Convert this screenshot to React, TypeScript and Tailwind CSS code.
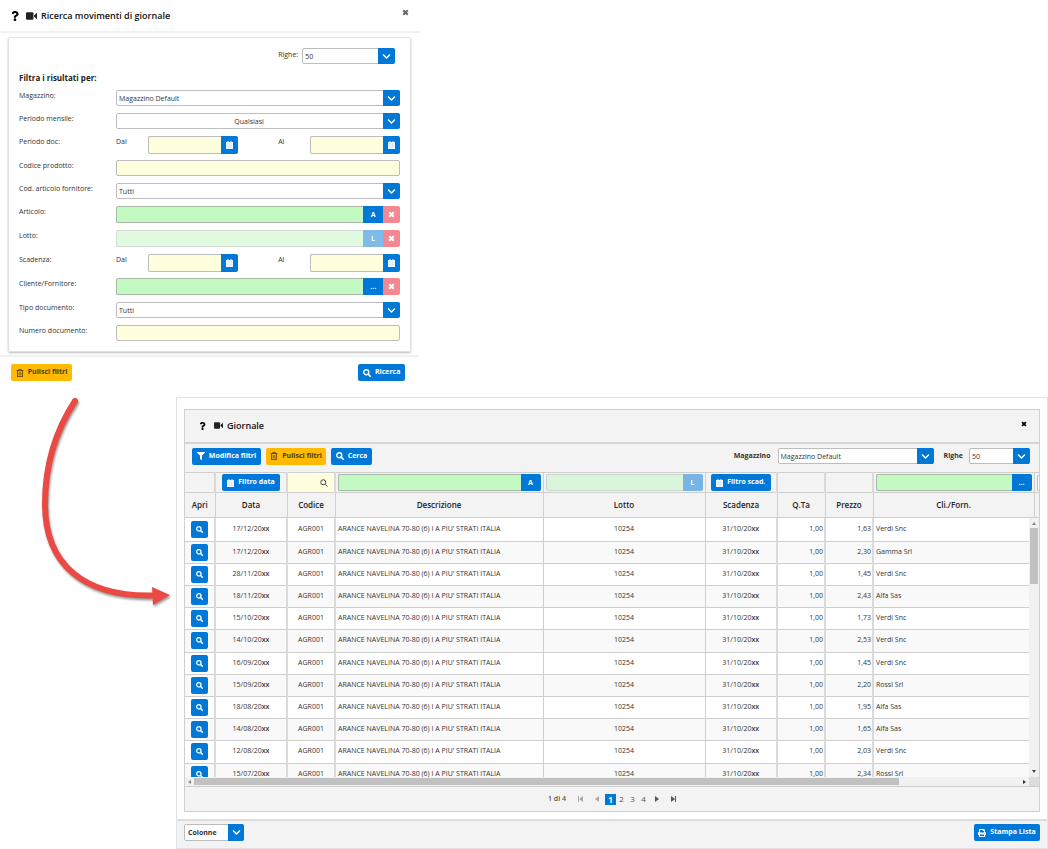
import React from 'react';
import { FaChevronDown, FaFilter, FaPrint, FaQuestion, FaRegTrashAlt } from 'react-icons/fa';

interface Movement {
    date: string;
    price: string;
    client: string;
}

const movements: Movement[] = [
    { date: '17/12/20', price: '1,63', client: 'Verdi Snc' },
    { date: '17/12/20', price: '2,30', client: 'Gamma Srl' },
    { date: '28/11/20', price: '1,45', client: 'Verdi Snc' },
    { date: '18/11/20', price: '2,43', client: 'Alfa Sas' },
    { date: '15/10/20', price: '1,73', client: 'Verdi Snc' },
    { date: '14/10/20', price: '2,53', client: 'Verdi Snc' },
    { date: '16/09/20', price: '1,45', client: 'Verdi Snc' },
    { date: '15/09/20', price: '2,20', client: 'Rossi Srl' },
    { date: '18/08/20', price: '1,95', client: 'Alfa Sas' },
    { date: '14/08/20', price: '1,65', client: 'Alfa Sas' },
    { date: '12/08/20', price: '2,03', client: 'Verdi Snc' },
    { date: '15/07/20', price: '2,34', client: 'Rossi Srl' },
];

type IconProps = { className?: string };

const CalendarIcon: React.FC<IconProps> = ({ className }) => (
    <svg viewBox="0 0 14 16" className={className} fill="currentColor">
        <path d="M3 0h2v2h4V0h2v2h3v14H0V2h3z" opacity=".95" />
        <path d="M1 6h12M5 6v9M9 6v9M1 10.500h12" stroke="#0078d7" strokeWidth=".6" opacity=".3" />
    </svg>
);

const SearchIcon: React.FC<IconProps> = ({ className }) => (
    <svg viewBox="0 0 16 16" className={className} fill="none" stroke="currentColor">
        <circle cx="6.500" cy="6.500" r="5" strokeWidth="2.800" />
        <path d="M10.500 10.500l4 4" strokeWidth="3.400" strokeLinecap="round" />
    </svg>
);

const CrossIcon: React.FC<IconProps> = ({ className }) => (
    <svg viewBox="0 0 14 14" className={className}>
        <path d="M2.500 2.500l9 9M11.500 2.500l-9 9" stroke="currentColor" strokeWidth="4" />
    </svg>
);

const VideoIcon: React.FC<IconProps> = ({ className }) => (
    <svg viewBox="0 0 20 14" className={className} fill="currentColor">
        <rect width="13.500" height="14" rx="2" />
        <path d="M14.500 6L20 1v12l-5.500-5z" />
    </svg>
);

const Select: React.FC<{ id: string; value: string; className?: string; align?: string }> = ({ id, value, className = '', align = 'pl-[2px]' }) => (
    <div className={`relative h-4 ${className}`}>
        <select id={id} className={`block w-full h-4 appearance-none rounded-[2px] border border-[#bdbdbd] bg-white pt-[2px] pr-[18px] text-[7px] leading-3 text-[#333] ${align}`}>
            <option>{value}</option>
        </select>
        <span className="pointer-events-none absolute right-0 top-0 flex h-4 w-[17px] items-center justify-center rounded-r-[2px] bg-[#0078d7] text-white">
            <FaChevronDown className="size-[9px]" />
        </span>
    </div>
);

const DateField: React.FC<{ id: string; label: string }> = ({ id, label }) => (
    <div className="flex">
        <label htmlFor={id} className="w-8 leading-3">{label}</label>
        <input id={id} className="h-[18px] w-[73px] rounded-l-[2px] border border-r-0 border-[#bdbdbd] bg-[#ffffdd]" />
        <button aria-label="Calendario" className="flex h-[18px] w-[17px] items-center justify-center rounded-r-[2px] bg-[#0078d7] text-white">
            <CalendarIcon className="h-2 w-[7px]" />
        </button>
    </div>
);

const DateRange: React.FC<{ id: string }> = ({ id }) => (
    <div className="flex justify-between">
        <DateField id={`${id}-dal`} label="Dal" />
        <DateField id={`${id}-al`} label="Al" />
    </div>
);

const Lookup: React.FC<{ id: string; letter: string; disabled?: boolean; clearable?: boolean; label?: string }> = ({ id, letter, disabled, clearable, label }) => (
    <div className="flex h-[17px]">
        <div className={`flex flex-1 ${disabled ? 'opacity-50' : ''}`}>
            <input id={id} aria-label={label} disabled={disabled} className="min-w-0 flex-1 rounded-l-[2px] border border-r-0 border-[#aab8aa] bg-[#c3f9c3]" />
            <button disabled={disabled} className={`w-5 bg-[#0078d7] pt-px text-[7px] font-bold text-white ${clearable ? '' : 'rounded-r-[2px]'}`}>{letter}</button>
        </div>
        {clearable && (
            <button aria-label="Rimuovi" className="flex w-[17px] items-center justify-center rounded-r-[2px] bg-[#f48890] text-white">
                <CrossIcon className="size-[7px]" />
            </button>
        )}
    </div>
);

const TextField: React.FC<{ id: string }> = ({ id }) => (
    <input id={id} className="block h-4 w-full rounded-[2px] border border-[#bdbdbd] bg-[#ffffdd]" />
);

const Field: React.FC<{ label: string; id: string; tall?: boolean; children: React.ReactNode }> = ({ label, id, tall, children }) => (
    <div className={`flex ${tall ? 'h-6' : 'h-[23px]'}`}>
        <label htmlFor={id} className="w-[97px] shrink-0 leading-3">{label}</label>
        <div className="flex-1">{children}</div>
    </div>
);

const ActionButton: React.FC<{ icon: React.ReactNode; color?: 'blue' | 'yellow'; className?: string; children: React.ReactNode }> = ({ icon, color = 'blue', className = '', children }) => (
    <button className={`flex h-[17px] items-center justify-center gap-1 whitespace-nowrap rounded-[2px] text-[7px] font-bold ${color === 'blue' ? 'bg-[#0078d7] text-white' : 'bg-[#ffba01] text-[#4a3a10]'} ${className}`}>
        {icon}
        {children}
    </button>
);

const SearchDialog: React.FC = () => (
    <section className="w-[40%] bg-white">
        <header className="flex h-[33px] items-center border-b-2 border-[#eff1f5] pl-[11px] pr-[10px] text-black">
            <FaQuestion className="mr-[7px] h-[10px] w-2" />
            <VideoIcon className="mr-1 h-2 w-[11px] text-[#222]" />
            <h1 className="flex-1 text-[9px] font-semibold text-[#111]">Ricerca movimenti di giornale</h1>
            <button aria-label="Chiudi" className="mb-[6px] text-[#666]"><CrossIcon className="size-[7px]" /></button>
        </header>
        <div className="mx-2 mt-1 mb-[3px] rounded-[2px] border border-[#dfe3e8] px-[10px] pb-[3px] pt-[10px] shadow-[0_1px_2px_#bbb]">
            <div className="mb-[7px] flex justify-end gap-1 pr-[5px]">
                <label htmlFor="righe" className="leading-[14px]">Righe:</label>
                <Select id="righe" value="50" className="w-[93px]" />
            </div>
            <h2 className="mb-[5px] text-[8px] font-bold leading-[14px] text-[#222]">Filtra i risultati per:</h2>
            <Field label="Magazzino:" id="mag"><Select id="mag" value="Magazzino Default" /></Field>
            <Field label="Periodo mensile:" id="mese"><Select id="mese" value="Qualsiasi" align="text-center" /></Field>
            <Field label="Periodo doc:" id="doc-dal" tall><DateRange id="doc" /></Field>
            <Field label="Codice prodotto:" id="codice"><TextField id="codice" /></Field>
            <Field label="Cod. articolo fornitore:" id="forn"><Select id="forn" value="Tutti" /></Field>
            <Field label="Articolo:" id="articolo" tall><Lookup id="articolo" letter="A" clearable /></Field>
            <Field label="Lotto:" id="lotto" tall><Lookup id="lotto" letter="L" disabled clearable /></Field>
            <Field label="Scadenza:" id="scad-dal" tall><DateRange id="scad" /></Field>
            <Field label="Cliente/Fornitore:" id="cliente" tall><Lookup id="cliente" letter="..." clearable /></Field>
            <Field label="Tipo documento:" id="tipo"><Select id="tipo" value="Tutti" /></Field>
            <Field label="Numero documento:" id="numero"><TextField id="numero" /></Field>
        </div>
        <footer className="flex justify-between border-t-2 border-[#eff1f5] pb-2 pl-[11px] pr-[14px] pt-[7px]">
            <ActionButton color="yellow" className="w-[61px]" icon={<FaRegTrashAlt className="size-2" />}>Pulisci filtri</ActionButton>
            <ActionButton className="w-[47px]" icon={<SearchIcon className="size-2" />}>Ricerca</ActionButton>
        </footer>
    </section>
);

const Arrow: React.FC = () => (
    <svg viewBox="0 -1 176 220" className="h-[220px] w-[176px] shrink-0 drop-shadow-[1px_2px_1px_rgba(0,0,0,0.4)]">
        <path d="M75 3C56 32 45 68 45 106c0 60 38 93 108 91.500" fill="none" stroke="#ea4a43" strokeWidth="6" strokeLinecap="round" />
        <path d="M152 189l18 8-17 10z" fill="#ea4a43" />
    </svg>
);

const Columns: React.FC = () => (
    <colgroup>
        <col className="w-[30px]" />
        <col className="w-[72px]" />
        <col className="w-[48px]" />
        <col />
        <col className="w-[162px]" />
        <col className="w-[72px]" />
        <col className="w-[48px]" />
        <col className="w-[48px]" />
        <col className="w-[161px]" />
        <col className="w-[5px]" />
    </colgroup>
);

const cell = 'border-r border-[#cfcfcf]';
const wideCell = 'border-r-2 border-b-[#cfcfcf] border-r-[#dadada]';

const JournalTable: React.FC = () => (
    <>
        <table className="w-full table-fixed border-collapse bg-[#f3f3f3] text-[8px] text-[#222]">
            <Columns />
            <thead>
                <tr className="h-5 border-y border-[#cfcfcf]">
                    <td className={wideCell}></td>
                    <td className={`${wideCell} px-[6px]`}><ActionButton className="w-full" icon={<CalendarIcon className="h-2 w-[7px]" />}>Filtro data</ActionButton></td>
                    <td className={`${wideCell} bg-[#ffffdd] pr-[6px]`}>
                        <button aria-label="Cerca codice" className="ml-auto block">
                            <svg viewBox="0 0 16 16" className="size-2 text-[#444]" fill="none" stroke="currentColor" strokeWidth="2">
                                <circle cx="6.500" cy="6.500" r="5" />
                                <path d="M10.500 10.500l4.500 4.500" />
                            </svg>
                        </button>
                    </td>
                    <td className={`${cell} px-[2px]`}><Lookup id="f-descr" label="Descrizione" letter="A" /></td>
                    <td className={`${cell} px-[2px]`}><Lookup id="f-lotto" label="Lotto" letter="L" disabled /></td>
                    <td className={`${wideCell} px-[5px]`}><ActionButton className="w-full" icon={<CalendarIcon className="h-2 w-[7px]" />}>Filtro scad.</ActionButton></td>
                    <td className={wideCell}></td>
                    <td className={wideCell}></td>
                    <td className={`${cell} px-[2px]`}><Lookup id="f-cli" label="Cli./Forn." letter="..." /></td>
                    <td className="pl-[2px]"><div className="h-4 rounded-l-[2px] border border-r-0 border-[#bdbdbd] bg-white" /></td>
                </tr>
                <tr className="h-[25px] border-b border-[#cfcfcf]">
                    {['Apri', 'Data', 'Codice', 'Descrizione', 'Lotto', 'Scadenza', 'Q.Ta', 'Prezzo', 'Cli./Forn.'].map((name) => (
                        <th key={name} className={`${cell} font-semibold`}>{name}</th>
                    ))}
                    <th></th>
                </tr>
            </thead>
        </table>
        <div className="relative h-[259px] overflow-hidden">
            <table className="w-full table-fixed border-collapse text-[7px] text-[#333]">
                <Columns />
                <tbody>
                    {movements.map((row, i) => (
                        <tr key={i} className="h-[22px] border-b border-[#cfcfcf] even:bg-[#f9f9f9] nth-[5n+1]:h-[23px]">
                            <td className={wideCell}>
                                <button aria-label="Apri" className="mx-auto flex h-[17px] w-[17px] items-center justify-center rounded-[2px] bg-[#0078d7] text-white"><SearchIcon className="size-[7px]" /></button>
                            </td>
                            <td className={`${wideCell} text-center`}>{row.date}<span className="font-semibold">xx</span></td>
                            <td className={`${wideCell} text-center`}>AGR001</td>
                            <td className={`${cell} truncate pl-[2px]`}>ARANCE NAVELINA 70-80 (6) I A PIU' STRATI ITALIA</td>
                            <td className={`${cell} text-center`}>10254</td>
                            <td className={`${wideCell} text-center`}>31/10/20<span className="font-semibold">xx</span></td>
                            <td className={`${wideCell} pr-px text-right`}>1,00</td>
                            <td className={`${wideCell} pr-px text-right`}>{row.price}</td>
                            <td className="pl-[2px]">{row.client}</td>
                            <td></td>
                        </tr>
                    ))}
                </tbody>
            </table>
            <div className="absolute inset-y-0 right-0 flex w-[10px] flex-col items-center justify-between bg-[#f1f1f1] py-1">
                <svg viewBox="0 0 4 3" className="h-[3px] w-1"><path d="M0 3l2-3 2 3z" fill="#888" /></svg>
                <div className="absolute inset-x-px top-[10px] h-14 bg-[#c1c1c1]" />
                <svg viewBox="0 0 4 3" className="h-[3px] w-1"><path d="M0 0l2 3 2-3z" fill="#444" /></svg>
            </div>
        </div>
        <div className="flex h-[9px] items-center bg-[#f1f1f1]">
            <svg viewBox="0 0 3 4" className="mx-[3px] h-1 w-[3px]"><path d="M3 0L0 2l3 2z" fill="#888" /></svg>
            <div className="flex-1"><div className="h-[7px] w-[85%] bg-[#c1c1c1]" /></div>
            <svg viewBox="0 0 3 4" className="mr-[3px] h-1 w-[3px]"><path d="M0 0l3 2-3 2z" fill="#333" /></svg>
            <div className="h-[9px] w-[10px] bg-[#dcdcdc]" />
        </div>
    </>
);

const Paginator: React.FC = () => (
    <nav className="flex h-[25px] items-center justify-center border-t border-[#cfcfcf] bg-[#f3f3f3] text-[8px] text-[#555]">
        <span className="mr-3 text-[7px] font-semibold">1 di 4</span>
        <button aria-label="Prima pagina" className="mr-3"><svg viewBox="0 0 5 6" className="h-[6px] w-[5px]"><path d="M0 0h1v6H0zM5 0v6L1 3z" fill="#aaa" /></svg></button>
        <button aria-label="Pagina precedente" className="mr-[6px]"><svg viewBox="0 0 4 6" className="h-[6px] w-1"><path d="M4 0v6L0 3z" fill="#aaa" /></svg></button>
        <button className="h-[11px] w-[11px] bg-[#0078d7] font-bold leading-[11px] text-white">1</button>
        <button className="w-[11px]">2</button>
        <button className="w-[11px]">3</button>
        <button className="w-[11px]">4</button>
        <button aria-label="Pagina successiva" className="ml-[6px]"><svg viewBox="0 0 4 6" className="h-[6px] w-1"><path d="M0 0v6l4-3z" fill="#555" /></svg></button>
        <button aria-label="Ultima pagina" className="ml-3"><svg viewBox="0 0 5 6" className="h-[6px] w-[5px]"><path d="M4 0h1v6H4zM0 0v6l4-3z" fill="#555" /></svg></button>
    </nav>
);

const JournalPanel: React.FC = () => (
    <section className="min-w-0 flex-1 border border-[#dfe3e8] bg-white">
        <div className="mx-[7px] mb-[7px] mt-[11px] border border-[#cfcfcf]">
            <header className="flex h-8 items-center bg-[#f3f3f3] pb-px pl-[14px] pr-3 text-black">
                <FaQuestion className="mr-2 h-2 w-[7px]" />
                <VideoIcon className="mr-1 h-[7px] w-[9px] text-[#222]" />
                <h2 className="flex-1 text-[9px] font-semibold text-[#111]">Giornale</h2>
                <button aria-label="Chiudi" className="mb-1"><CrossIcon className="size-[6px]" /></button>
            </header>
            <div className="flex h-[30px] items-center border-t-2 border-[#d5d5d5] bg-[#f3f3f3] pb-1 pl-[7px] pr-[9px]">
                <ActionButton className="w-[69px]" icon={<FaFilter className="size-2" />}>Modifica filtri</ActionButton>
                <ActionButton color="yellow" className="ml-[5px] w-[60px]" icon={<FaRegTrashAlt className="size-2" />}>Pulisci filtri</ActionButton>
                <ActionButton className="ml-[5px] w-[41px]" icon={<SearchIcon className="size-2" />}>Cerca</ActionButton>
                <label htmlFor="mag-lista" className="ml-auto mr-[7px] text-[7px] font-bold">Magazzino</label>
                <Select id="mag-lista" value="Magazzino Default" className="w-[156px]" />
                <label htmlFor="righe-lista" className="ml-[10px] mr-[6px] text-[7px] font-bold">Righe</label>
                <Select id="righe-lista" value="50" className="w-[61px]" />
            </div>
            <JournalTable />
            <Paginator />
        </div>
        <footer className="flex h-[29px] items-center justify-between border-t-2 border-[#dcdcdc] bg-[#f3f3f3] px-[7px] pb-1">
            <div className="relative">
                <select aria-label="Colonne" className="block h-[17px] w-[60px] appearance-none rounded-[2px] border border-[#bdbdbd] bg-white pl-[3px] text-[7px] font-bold leading-[14px] text-[#333]">
                    <option>Colonne</option>
                </select>
                <span className="pointer-events-none absolute right-0 top-0 flex h-[17px] w-4 items-center justify-center rounded-r-[2px] bg-[#0078d7] text-white"><FaChevronDown className="size-[9px]" /></span>
            </div>
            <ActionButton className="w-[66px]" icon={<FaPrint className="size-2" />}>Stampa Lista</ActionButton>
        </footer>
    </section>
);

export default function App() {
    return (
        <main className="bg-white font-['Open_Sans',sans-serif] text-[7px] text-[#333]">
            <SearchDialog />
            <div className="mt-2 flex">
                <Arrow />
                <JournalPanel />
            </div>
        </main>
    );
}
